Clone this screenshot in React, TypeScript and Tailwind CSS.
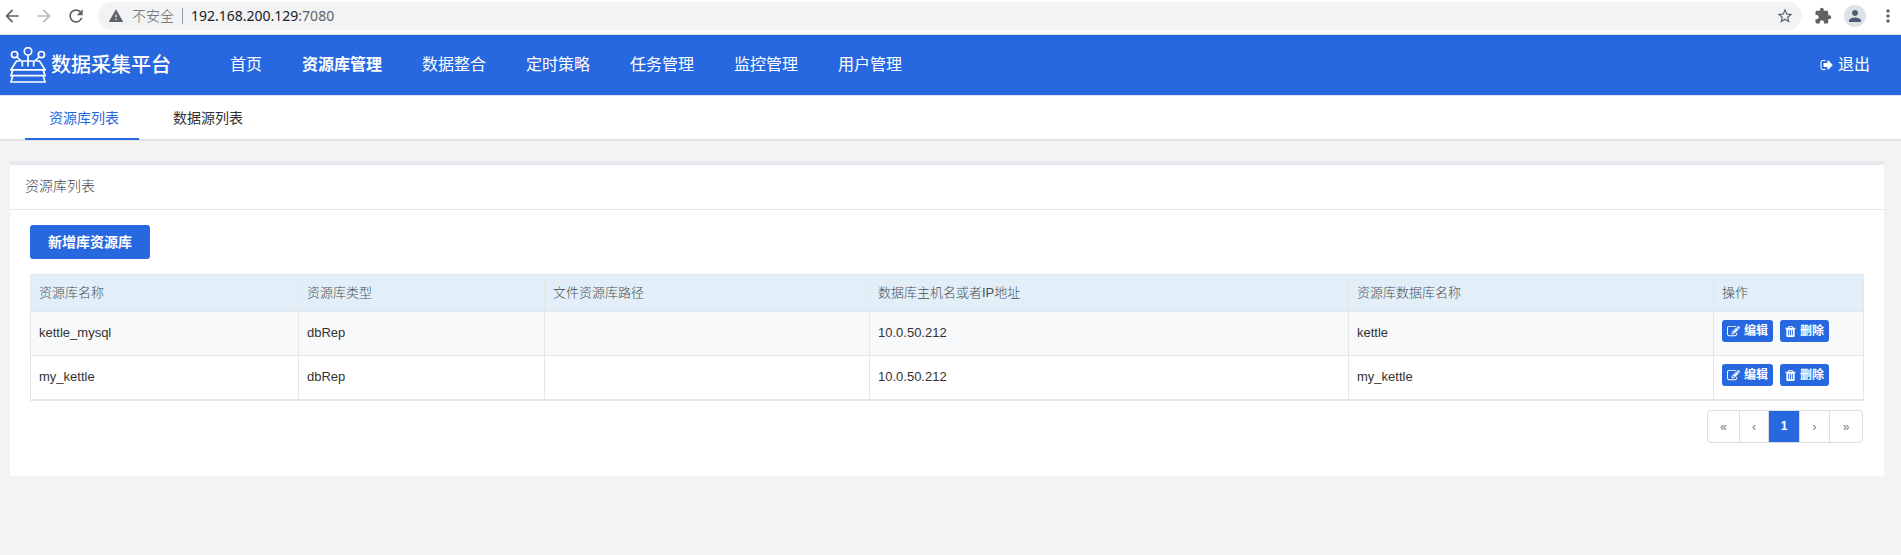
import type { ReactNode } from "react";
import {
  MdArrowBack,
  MdArrowForward,
  MdExtension,
  MdMoreVert,
  MdPerson,
  MdRefresh,
  MdStarBorder,
  MdWarning,
} from "react-icons/md";

const NAV = ["首页", "资源库管理", "数据整合", "定时策略", "任务管理", "监控管理", "用户管理"];
const ACTIVE_NAV = "资源库管理";

const REPOSITORIES = [
  { name: "kettle_mysql", type: "dbRep", path: "", host: "10.0.50.212", database: "kettle" },
  { name: "my_kettle", type: "dbRep", path: "", host: "10.0.50.212", database: "my_kettle" },
];

const COLUMNS = [
  { title: "资源库名称", width: "w-[268px]" },
  { title: "资源库类型", width: "w-[246px]" },
  { title: "文件资源库路径", width: "w-[325px]" },
  { title: "数据库主机名或者IP地址", width: "w-[479px]" },
  { title: "资源库数据库名称", width: "w-[365px]" },
  { title: "操作", width: "w-[150px]" },
];

function Glyph({
  d,
  className,
  viewBox = "0 0 1792 1792",
}: {
  d: string;
  className: string;
  viewBox?: string;
}) {
  return (
    <svg viewBox={viewBox} fill="currentColor" aria-hidden="true" className={className}>
      <path d={d} />
    </svg>
  );
}

const SIGN_OUT =
  "M704 1440q0 4 1 20t.5 26.5-3 23.5-10 19.5-20.5 6.5h-320q-119 0-203.5-84.5t-84.5-203.5v-704q0-119 84.5-203.5t203.5-84.5h320q13 0 22.5 9.5t9.5 22.5q0 4 1 20t.5 26.5-3 23.5-10 19.5-20.5 6.5h-320q-66 0-113 47t-47 113v704q0 66 47 113t113 47h312l11.5 1 11.5 3 8 5.5 7 9 2 13.5zm928-544q0 26-19 45l-544 544q-19 19-45 19t-45-19-19-45v-288h-448q-26 0-45-19t-19-45v-384q0-26 19-45t45-19h448v-288q0-26 19-45t45-19 45 19l544 544q19 19 19 45z";
const EDIT =
  "M888 1184l116-116-152-152-116 116v56h96v96h56zm440-720q-16-16-33 1l-350 350q-17 17-1 33t33-1l350-350q17-17 1-33zm80 594v190q0 119-84.5 203.5t-203.5 84.5h-832q-119 0-203.5-84.5t-84.5-203.5v-832q0-119 84.5-203.5t203.5-84.5h832q63 0 117 25 15 7 18 23 3 17-9 29l-49 49q-14 14-32 8-23-6-45-6h-832q-66 0-113 47t-47 113v832q0 66 47 113t113 47h832q66 0 113-47t47-113v-126q0-13 9-22l64-64q15-15 35-7t20 29zm-96-738l288 288-672 672h-288v-288zm444 132l-92 92-288-288 92-92q28-28 68-28t68 28l152 152q28 28 28 68t-28 68z";
const TRASH =
  "M704 1376v-704q0-14-9-23t-23-9h-64q-14 0-23 9t-9 23v704q0 14 9 23t23 9h64q14 0 23-9t9-23zm256 0v-704q0-14-9-23t-23-9h-64q-14 0-23 9t-9 23v704q0 14 9 23t23 9h64q14 0 23-9t9-23zm256 0v-704q0-14-9-23t-23-9h-64q-14 0-23 9t-9 23v704q0 14 9 23t23 9h64q14 0 23-9t9-23zm-544-992h448l-48-117q-7-9-17-11h-317q-10 2-17 11zm928 32v64q0 14-9 23t-23 9h-96v948q0 83-47 143.5t-113 60.5h-832q-66 0-113-58.5t-47-141.5v-952h-96q-14 0-23-9t-9-23v-64q0-14 9-23t23-9h309l70-167q15-37 54-63t79-26h320q40 0 79 26t54 63l70 167h309q14 0 23 9t9 23z";

function Logo() {
  return (
    <svg
      viewBox="0 0 36 36"
      fill="none"
      stroke="currentColor"
      strokeWidth="1.7"
      aria-hidden="true"
      className="size-9"
    >
      <circle cx="18" cy="4.3" r="3.7" />
      <circle cx="4.6" cy="7.6" r="3.1" />
      <circle cx="31.4" cy="7.6" r="3.1" />
      <path d="M18 8V19.5M7 10 12.3 15V19.5M29 10 23.7 15V19.5" />
      <path d="M10 14H6.5L1 22.8H35L29.5 14H26M12.3 14H23.7" />
      <path d="M2.6 23.5 1 28.7H35L33.4 23.5M2.6 29.5 1 35H35L33.4 29.5" />
    </svg>
  );
}

function BrowserBar() {
  return (
    <div className="flex h-[35px] items-center border-b border-[#dadce0] bg-white pr-[3px] pb-0.5 text-[#5f6368]">
      <button type="button" aria-label="后退" className="ml-0.5">
        <MdArrowBack className="size-5" />
      </button>
      <button type="button" aria-label="前进" className="ml-3 text-[#b9bbbe]">
        <MdArrowForward className="size-5" />
      </button>
      <button type="button" aria-label="重新加载" className="ml-3">
        <MdRefresh className="size-5" />
      </button>
      <div className="ml-3 flex h-7 flex-1 items-center rounded-full bg-[#f1f3f4] pr-2 pl-2.5 text-sm">
        <MdWarning className="size-4" />
        <span className="ml-2 font-light">不安全</span>
        <span className="mx-2 h-4 w-px bg-[#9aa0a6]" />
        <span className="font-['Noto_Sans',sans-serif]">
          <span className="text-[#202124]">192.168.200.129</span>:7080
        </span>
        <button type="button" aria-label="收藏" className="ml-auto">
          <MdStarBorder className="size-[18px]" />
        </button>
      </div>
      <button type="button" aria-label="扩展程序" className="ml-3">
        <MdExtension className="size-[18px]" />
      </button>
      <button
        type="button"
        aria-label="个人资料"
        className="ml-3 flex size-[22px] items-center justify-center rounded-full bg-[#dee1e6] text-[#4f5b75]"
      >
        <MdPerson className="size-[18px]" />
      </button>
      <button type="button" aria-label="更多" className="ml-3">
        <MdMoreVert className="size-5" />
      </button>
    </div>
  );
}

function ActionButton({ icon, children }: { icon: ReactNode; children: ReactNode }) {
  return (
    <button
      type="button"
      className="flex h-[22px] items-center gap-1 rounded-[3px] bg-[#2768e0] px-[5px] text-xs font-bold text-white"
    >
      {icon}
      {children}
    </button>
  );
}

export default function App() {
  return (
    <div className="min-h-screen bg-[#f3f3f3] font-['Liberation_Sans','Noto_Sans_CJK_SC',sans-serif] text-[#333]">
      <BrowserBar />

      <header className="flex h-[61px] items-center border-b border-[#dfe3ec] bg-[#2768e0] pl-2.5 pr-[31px] text-white">
        <a href="#home" className="flex items-center gap-[5px]">
          <Logo />
          <span className="text-xl font-medium">数据采集平台</span>
        </a>
        <nav className="ml-[59px] flex gap-10 text-base">
          {NAV.map((item) => (
            <a key={item} href={"#" + item} className={item === ACTIVE_NAV ? "font-bold" : ""}>
              {item}
            </a>
          ))}
        </nav>
        <a href="#logout" className="ml-auto flex items-center gap-1 text-base">
          <Glyph d={SIGN_OUT} className="size-3.5" />
          退出
        </a>
      </header>

      <nav className="flex h-[45px] gap-2.5 border-b-2 border-[#e3e3e3] bg-white pl-[25px] text-sm">
        <a
          href="#repositories"
          className="-mb-px flex items-center border-b-2 border-[#2768e0] pt-0.5 pr-5 pl-6 text-[#2768e0]"
        >
          资源库列表
        </a>
        <a
          href="#sources"
          className="-mb-px flex items-center border-b-2 border-transparent pt-0.5 pr-5 pl-6"
        >
          数据源列表
        </a>
      </nav>

      <main className="pt-5 pr-[17px] pl-2.5">
        <section className="border-t-4 border-[#e6e9ed] bg-white">
          <h1 className="flex h-[45px] items-center border-b border-[#e6e9ed] px-[15px] pb-0.5 text-sm font-light text-[#444]">
            资源库列表
          </h1>
          <div className="px-5 pt-[15px] pb-[33px]">
            <button
              type="button"
              className="h-[34px] rounded-[3px] bg-[#2768e0] px-[18px] text-sm font-bold text-white"
            >
              新增库资源库
            </button>
            <table className="mt-[15px] w-full table-fixed border-separate border-spacing-0 border-t border-b border-l border-[#e4e6e8] text-[13px]">
              <colgroup>
                {COLUMNS.map((column) => (
                  <col key={column.title} className={column.width} />
                ))}
              </colgroup>
              <thead>
                <tr className="h-[37px] bg-[#e2eff8] text-left text-[#4a4f54]">
                  {COLUMNS.map((column) => (
                    <th
                      key={column.title}
                      scope="col"
                      className="border-r border-b border-[#e4e6e8] px-2 font-light"
                    >
                      {column.title}
                    </th>
                  ))}
                </tr>
              </thead>
              <tbody>
                {REPOSITORIES.map((row) => (
                  <tr key={row.name} className="h-11 odd:bg-[#f8f9fb]">
                    {[row.name, row.type, row.path, row.host, row.database].map((value, index) => (
                      <td key={index} className="border-r border-b border-[#e4e6e8] px-2 pb-0.5">
                        {value}
                      </td>
                    ))}
                    <td className="border-r border-b border-[#e4e6e8] px-2 pt-2 align-top">
                      <div className="flex gap-[7px]">
                        <ActionButton icon={<Glyph d={EDIT} className="size-[13px]" />}>
                          编辑
                        </ActionButton>
                        <ActionButton
                          icon={
                            <Glyph d={TRASH} viewBox="138 0 1516 1792" className="h-[13px] w-[11px]" />
                          }
                        >
                          删除
                        </ActionButton>
                      </div>
                    </td>
                  </tr>
                ))}
              </tbody>
            </table>
            <nav aria-label="分页" className="mt-[9px] flex justify-end pr-px">
              <div className="flex h-[33px] divide-x divide-[#ddd] overflow-hidden rounded border border-[#ddd] text-xs text-[#777]">
                <button type="button" className="w-8">«</button>
                <button type="button" className="w-[29px]">‹</button>
                <button type="button" aria-current="page" className="w-[31px] bg-[#2768e0] pb-0.5 font-bold text-white">
                  1
                </button>
                <button type="button" className="w-[30px]">›</button>
                <button type="button" className="w-8">»</button>
              </div>
            </nav>
          </div>
        </section>
      </main>
    </div>
  );
}
